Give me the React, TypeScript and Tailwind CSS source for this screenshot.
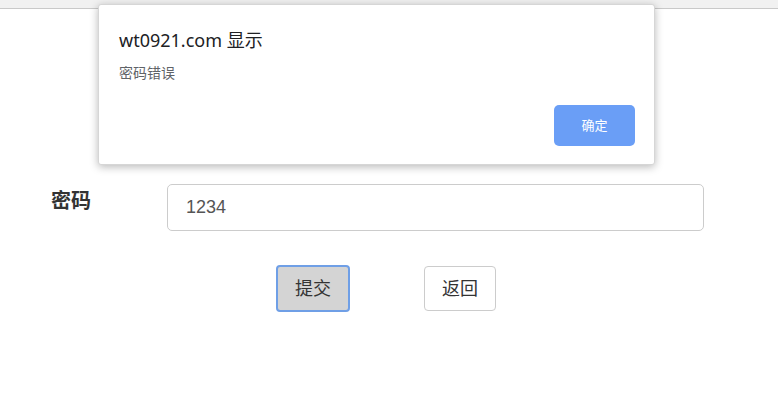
import React from "react";

const FONT = "font-['Noto_Sans','Noto_Sans_CJK_SC',sans-serif]";

/* ── Alert dialog (browser-style) ── */
function AlertBox() {
  return (
    <div className="absolute left-[98px] top-[4px] w-[557px] h-[161px] bg-white rounded-[3px] border border-[#d6d6d6] shadow-[0_2px_8px_rgba(0,0,0,0.28)] flex flex-col px-[20px]">
      <div className="pt-[22px] text-[18px] leading-[26px] text-[#202124]">wt0921.com 显示</div>
      <div className="mt-[10px] text-[14px] leading-[20px] text-[#5f6368]">密码错误</div>
      <div className="mt-auto mb-[18px] flex justify-end">
        <button className="w-[81px] h-[41px] rounded-[5px] bg-[#6a9ef6] text-white text-[13px] mr-[-1px]">
          确定
        </button>
      </div>
    </div>
  );
}

export default function App() {
  return (
    <div className={`relative w-[778px] h-[402px] bg-white overflow-hidden ${FONT}`}>
      {/* browser chrome strip */}
      <div className="h-[9px] bg-[#f1f1f1] border-b border-[#c9c9c9]" />

      {/* form */}
      <div className="pt-[175px]">
        <div className="flex items-center">
          <label className="w-[167px] pl-[51px] pb-[14px] text-[20px] font-bold text-[#333]">密码</label>
          <div className="w-[537px] h-[47px] border border-[#cccccc] rounded-[5px] flex items-center pl-[18px] text-[18px] text-[#555] font-['Liberation_Sans',sans-serif]">
            1234
          </div>
        </div>

        <div className="mt-[34px] flex items-center pl-[276px]">
          <button className="w-[74px] h-[47px] bg-[#d4d4d4] border-2 border-[#6f9fe6] rounded-[4px] text-[18px] text-[#333]">
            提交
          </button>
          <button className="ml-[74px] w-[72px] h-[45px] bg-white border border-[#cccccc] rounded-[4px] text-[18px] text-[#333]">
            返回
          </button>
        </div>
      </div>

      <AlertBox />
    </div>
  );
}
